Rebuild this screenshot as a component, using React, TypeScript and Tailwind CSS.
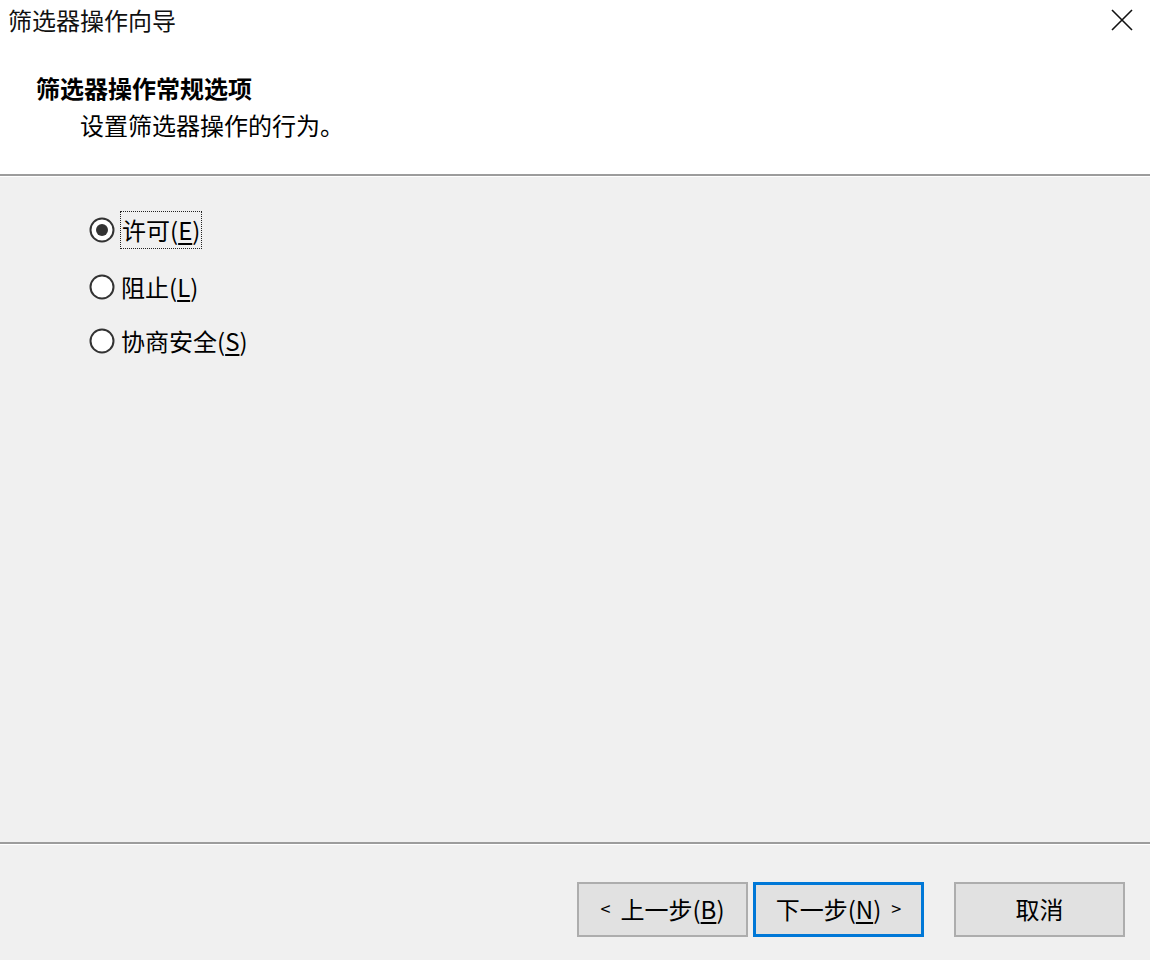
import React from "react";

const font = { fontFamily: '"Microsoft YaHei", "Noto Sans CJK SC", "Noto Sans", sans-serif' };

function Radio({ checked }: { checked?: boolean }) {
  return (
    <svg width="26" height="26" viewBox="0 0 26 26" className="shrink-0">
      <circle cx="13" cy="13" r="11.5" fill="#ffffff" stroke="#333333" strokeWidth="2" />
      {checked && <circle cx="13" cy="13" r="6" fill="#333333" />}
    </svg>
  );
}

export default function App() {
  return (
    <div className="w-[1150px] h-[960px] flex flex-col bg-[#f0f0f0] text-black overflow-hidden" style={font}>
      {/* header */}
      <div className="h-[174px] bg-white flex flex-col shrink-0">
        <div className="h-[40px] flex items-center justify-between pl-[8px] pr-[17px]">
          <span className="text-[24px] leading-[30px] text-[#111]">筛选器操作向导</span>
          <svg width="22" height="22" viewBox="0 0 22 22">
            <path d="M1 1 L21 21 M21 1 L1 21" stroke="#111" strokeWidth="1.6" />
          </svg>
        </div>
        <div className="mt-[33px] pl-[36px] text-[24px] leading-[30px] font-bold">筛选器操作常规选项</div>
        <div className="mt-[7px] pl-[80px] text-[24px] leading-[30px]">设置筛选器操作的行为。</div>
      </div>
      <div className="h-[2px] bg-[#9c9c9c] shrink-0" />
      <div className="h-[1px] bg-white shrink-0" />

      {/* body */}
      <div className="flex-1 flex flex-col pl-[89px] pt-[33px]">
        <div className="h-[40px] flex items-center gap-[5px]">
          <Radio checked />
          <span className="px-[1px] h-[38px] flex items-center border border-dotted border-[#222] text-[24px] leading-[30px]">
            许可(<span className="underline underline-offset-[3px]">E</span>)
          </span>
        </div>
        <div className="h-[40px] mt-[17px] flex items-center gap-[6px]">
          <Radio />
          <span className="text-[24px] leading-[30px]">
            阻止(<span className="underline underline-offset-[3px]">L</span>)
          </span>
        </div>
        <div className="h-[40px] mt-[14px] flex items-center gap-[6px]">
          <Radio />
          <span className="text-[24px] leading-[30px]">
            协商安全(<span className="underline underline-offset-[3px]">S</span>)
          </span>
        </div>
      </div>

      <div className="h-[2px] bg-[#9c9c9c] shrink-0" />
      <div className="h-[1px] bg-white shrink-0" />

      {/* footer */}
      <div className="h-[115px] shrink-0 flex items-start justify-end pr-[25px] pt-[37px]">
        <button className="w-[171px] h-[55px] pb-[2px] bg-[#e1e1e1] border-2 border-[#adadad] text-[24px] flex items-center justify-center">
          <span className="text-[18px] mr-[10px]">&lt;</span>
          上一步(<span className="underline underline-offset-[3px]">B</span>)
        </button>
        <button className="ml-[5px] w-[171px] h-[55px] pb-[2px] bg-[#e1e1e1] border-[3px] border-[#0078d7] text-[24px] flex items-center justify-center">
          下一步(<span className="underline underline-offset-[3px]">N</span>)
          <span className="text-[18px] ml-[10px]">&gt;</span>
        </button>
        <button className="ml-[30px] w-[171px] h-[55px] pb-[2px] bg-[#e1e1e1] border-2 border-[#adadad] text-[24px] flex items-center justify-center">
          取消
        </button>
      </div>
    </div>
  );
}
